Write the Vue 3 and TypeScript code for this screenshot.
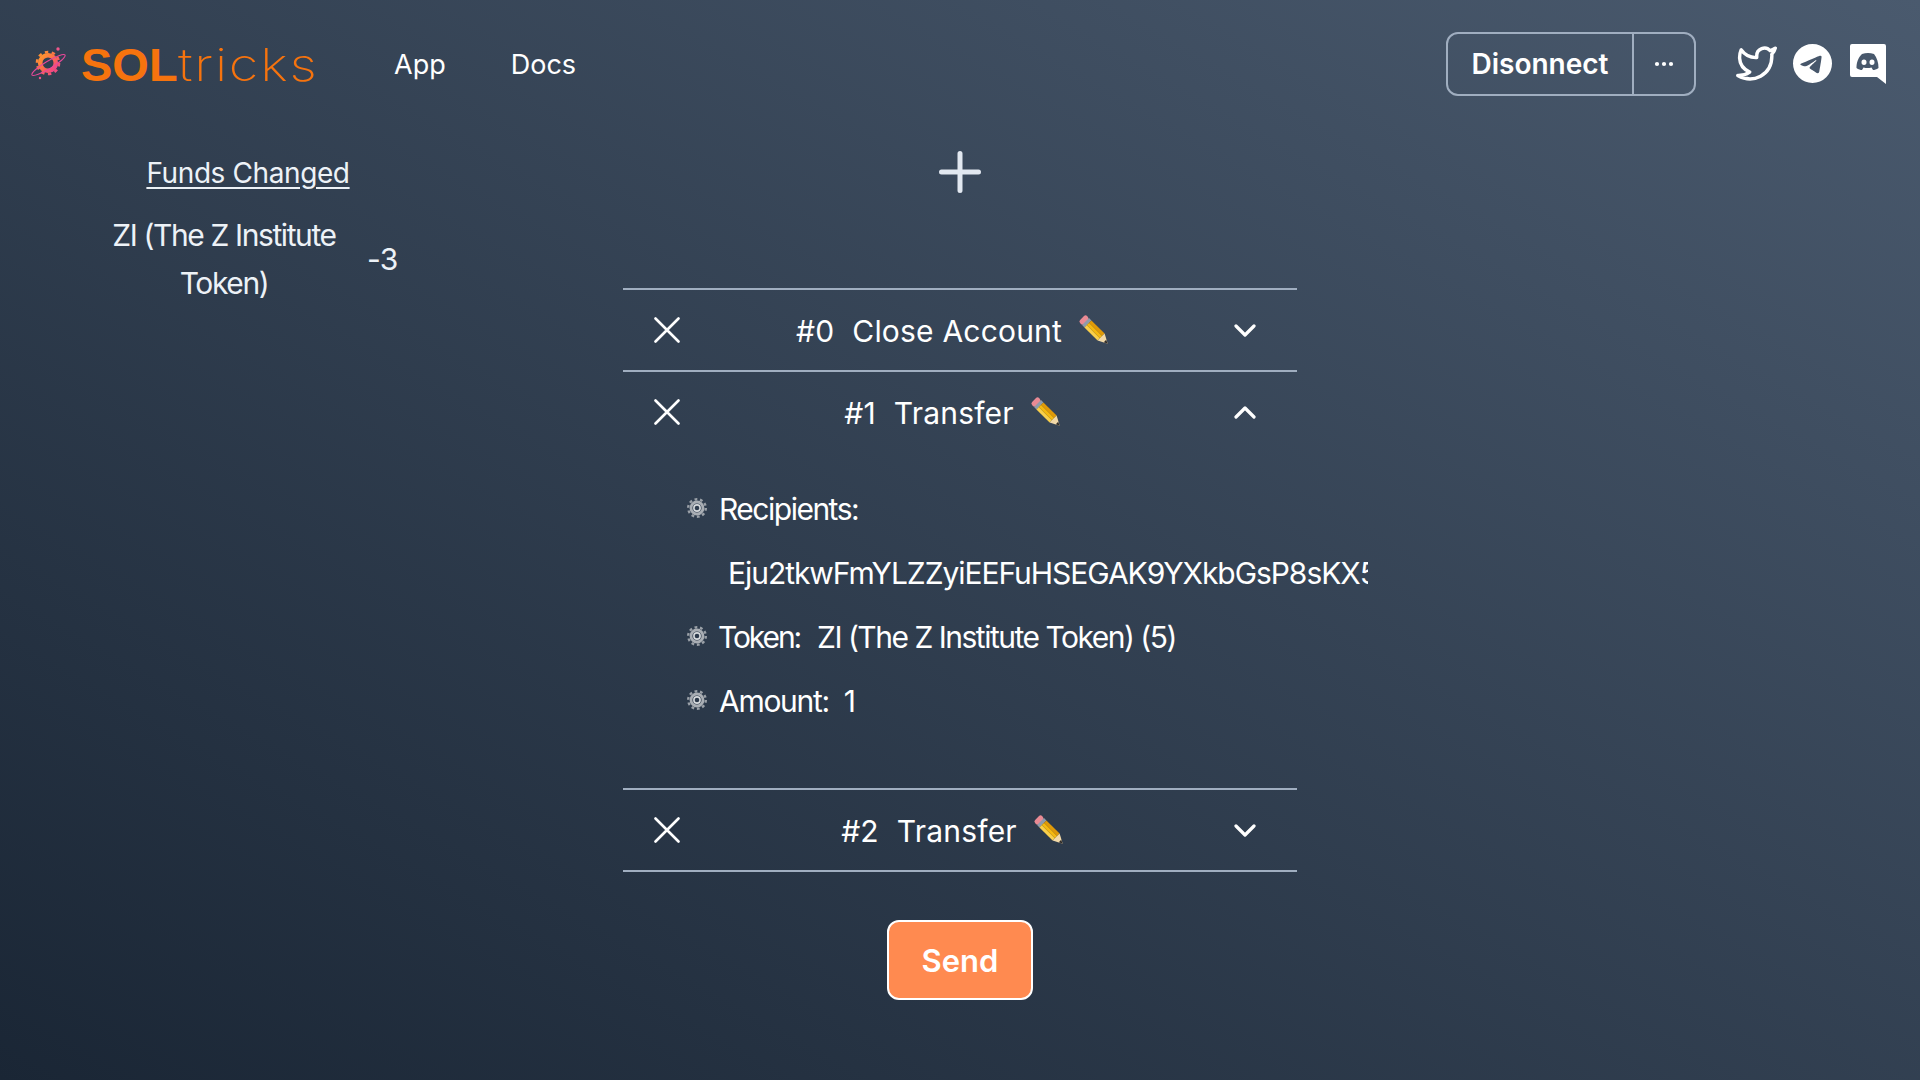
<script setup lang="ts">
interface Instruction {
  id: number
  name: string
  open: boolean
}

const instructions: Instruction[] = [
  { id: 0, name: 'Close Account', open: false },
  { id: 1, name: 'Transfer', open: true },
  { id: 2, name: 'Transfer', open: false },
]

const recipient = 'Eju2tkwFmYLZZyiEEFuHSEGAK9YXkbGsP8sKX5wnmHkP'
</script>

<template>
  <div class="page">
    <header class="topbar">
      <div class="brand">
        <svg class="brand-mark" viewBox="0 0 36 34">
          <defs>
            <linearGradient id="markFill" x1="0" y1="0" x2="1" y2="1">
              <stop offset="0" stop-color="#ff9a2a" />
              <stop offset="0.55" stop-color="#fb6a4f" />
              <stop offset="1" stop-color="#ee3f94" />
            </linearGradient>
          </defs>
          <circle cx="16" cy="16" r="7.800" fill="none" stroke="url(#markFill)" stroke-width="4.600" />
          <circle cx="16" cy="16" r="11" fill="none" stroke="url(#markFill)" stroke-width="2.600" stroke-dasharray="3.400 3.510" />
          <ellipse cx="16.500" cy="18" rx="19.300" ry="3.800" transform="rotate(-31 16.500 18)" fill="none" stroke="#e8489a" stroke-width="1.100" />
          <circle cx="26" cy="2" r="1.700" fill="#f0568c" />
          <circle cx="8" cy="31" r="1.200" fill="#f0568c" />
        </svg>
        <span class="brand-name"><b>SOL</b><i>tricks</i></span>
      </div>
      <nav class="nav">
        <a>App</a>
        <a>Docs</a>
      </nav>
      <div class="spacer"></div>
      <div class="wallet">
        <button class="wallet-main">Disonnect</button>
        <button class="wallet-more">
          <svg viewBox="0 0 20 6" width="20" height="6"><circle cx="3" cy="3" r="2.100" /><circle cx="10" cy="3" r="2.100" /><circle cx="17" cy="3" r="2.100" /></svg>
        </button>
      </div>
      <div class="socials">
        <svg class="tw" viewBox="0 0 24 24" fill="none" stroke="#fff" stroke-width="2" stroke-linejoin="round" stroke-linecap="round">
          <path d="M23 3a10.9 10.9 0 0 1-3 1.53 4.48 4.48 0 0 0-7.86 3v1A10.66 10.66 0 0 1 3 4s-4 9 5 13a11.64 11.64 0 0 1-7 2c9 5 20 0 20-11.5a4.5 4.5 0 0 0-.08-.83A7.72 7.72 0 0 0 23 3z" />
        </svg>
        <svg class="tg" viewBox="0 0 16 16" fill="#fff">
          <path fill-rule="evenodd" d="M16 8A8 8 0 1 1 0 8a8 8 0 0 1 16 0zM8.287 5.906c-.778.324-2.334.994-4.666 2.01-.378.15-.577.298-.595.442-.03.243.275.339.69.47l.175.055c.408.133.958.288 1.243.294.26.006.549-.1.868-.32 2.179-1.471 3.304-2.214 3.374-2.23.05-.012.12-.026.166.016.047.041.042.12.037.141-.03.129-1.227 1.241-1.846 1.817-.193.18-.33.307-.358.336a8.154 8.154 0 0 1-.188.186c-.38.366-.664.64.015 1.088.327.216.589.393.85.571.284.194.568.387.936.629.093.06.183.125.27.187.331.236.63.448.997.414.214-.02.435-.22.547-.82.265-1.417.786-4.486.906-5.751a1.426 1.426 0 0 0-.013-.315.337.337 0 0 0-.114-.217.526.526 0 0 0-.31-.093c-.3.005-.763.166-2.984 1.09z" />
        </svg>
        <svg class="dc" viewBox="0 0 36 40" fill="#fff">
          <path fill-rule="evenodd" d="M2 0h32a2 2 0 0 1 2 2v38l-9-7H2a2 2 0 0 1-2-2V2a2 2 0 0 1 2-2zM12 10c4-1.2 8-1.2 12 0 3 4 4.500 8.500 4.500 14-2 1.500-4 2-5.500 2l-1.500-2.500c-3 .8-5 .8-8 0L12 26c-1.500 0-3.500-.5-5.500-2 0-5.500 1.500-10 5.500-14zM14 15.500a2.500 2.700 0 1 0 0 5.400a2.500 2.700 0 1 0 0-5.400zM22 15.500a2.500 2.700 0 1 0 0 5.400a2.500 2.700 0 1 0 0-5.400z" />
        </svg>
      </div>
    </header>

    <main class="content">
      <aside class="funds">
        <div class="funds-title">Funds Changed</div>
        <div class="funds-row">
          <div class="funds-token">ZI (The Z Institute Token)</div>
          <div class="funds-delta">-3</div>
        </div>
      </aside>

      <section class="builder">
        <button class="add">
          <svg viewBox="0 0 42 42" width="42" height="42"><path d="M21 2.500v37M2.500 21h37" stroke="#e2e8f0" stroke-width="5" stroke-linecap="round" /></svg>
        </button>

        <div class="list">
          <div v-for="item in instructions" :key="item.id" class="item">
            <div class="item-head">
              <svg class="close" viewBox="0 0 26 26"><path d="M1.500 1.500l23 23M24.500 1.500l-23 23" stroke="#fff" stroke-width="2.600" stroke-linecap="round" /></svg>
              <div class="item-title">
                <span>#{{ item.id }}</span>
                <span>{{ item.name }}</span>
                <svg class="pencil" viewBox="0 0 30 30">
                  <g transform="rotate(-45 15 15)">
                    <rect x="10.500" y="-1" width="9" height="5" rx="2" fill="#e98a94" />
                    <rect x="10.500" y="3.500" width="9" height="3" fill="#8f9bab" />
                    <rect x="10.500" y="6.500" width="3" height="17" fill="#f9cf4a" />
                    <rect x="13.500" y="6.500" width="3" height="17" fill="#f5b90f" />
                    <rect x="16.500" y="6.500" width="3" height="17" fill="#e09a08" />
                    <path d="M10.500 23.500h9L15 32z" fill="#f2d9a8" />
                    <path d="M13.500 28.500h3L15 32z" fill="#2d2a28" />
                  </g>
                </svg>
              </div>
              <svg class="chevron" viewBox="0 0 22 13"><path :d="item.open ? 'M2 11l9-9 9 9' : 'M2 2l9 9 9-9'" fill="none" stroke="#fff" stroke-width="3.200" stroke-linecap="round" stroke-linejoin="round" /></svg>
            </div>
            <div v-if="item.open" class="item-body">
              <div class="field">
                <svg class="gear" viewBox="0 0 20 20"><use href="#gearShape" /></svg>
                <span>Recipients:</span>
              </div>
              <div class="field address">{{ recipient }}</div>
              <div class="field">
                <svg class="gear" viewBox="0 0 20 20"><use href="#gearShape" /></svg>
                <span class="label">Token:</span>
                <span>ZI (The Z Institute Token) (5)</span>
              </div>
              <div class="field amount">
                <svg class="gear" viewBox="0 0 20 20"><use href="#gearShape" /></svg>
                <span>Amount:</span>
                <span>1</span>
              </div>
            </div>
          </div>
        </div>

        <button class="send">Send</button>
      </section>
    </main>

    <svg width="0" height="0" class="defs">
      <defs>
        <g id="gearShape" fill="none">
          <circle cx="10" cy="10" r="8.800" stroke="#9ba1a8" stroke-width="2.400" stroke-dasharray="2.800 2.730" />
          <circle cx="10" cy="10" r="6" stroke="#a9aeb4" stroke-width="2.800" />
          <circle cx="10" cy="10" r="3.100" stroke="#d6d9dc" stroke-width="1.600" />
        </g>
      </defs>
    </svg>
  </div>
</template>

<style>
html,
body {
  margin: 0;
  background: #1a2635;
}
</style>

<style scoped>
.page {
  min-height: 1080px;
  background: linear-gradient(to top right, #1a2635, #4a5a6e);
  font-family: Inter, "Liberation Sans", sans-serif;
  color: #fff;
  overflow: hidden;
}

.topbar {
  display: flex;
  align-items: center;
  height: 127px;
  padding: 0 34px 0 32px;
  box-sizing: border-box;
}

.brand {
  display: flex;
  align-items: center;
  width: 362px;
}

.brand-mark {
  width: 36px;
  height: 34px;
  flex: none;
  overflow: visible;
}

.brand-name {
  margin-left: 13px;
  color: #f6730e;
  font-size: 47px;
  line-height: 1;
  white-space: nowrap;
}

.brand-name b {
  font-family: "Liberation Sans", sans-serif;
  font-weight: 700;
}

.brand-name i {
  display: inline-block;
  font-style: normal;
  font-weight: 200;
  font-size: 45px;
  letter-spacing: 1.5px;
  transform: scaleX(1.2);
  transform-origin: left center;
}

.nav {
  display: flex;
  gap: 65px;
  margin-top: 2px;
  font-size: 27px;
}

.spacer {
  flex: 1;
}

.wallet {
  display: flex;
  height: 64px;
  border: 2px solid #a0aec0;
  border-radius: 12px;
  box-sizing: border-box;
}

.wallet button {
  background: none;
  border: 0;
  color: #fff;
  font-family: inherit;
  padding: 0;
}

.wallet-main {
  width: 186px;
  font-size: 28px;
  font-weight: 600;
  border-right: 2px solid #a0aec0 !important;
}

.wallet-more {
  width: 60px;
  display: flex;
  align-items: center;
  justify-content: center;
}

.wallet-more svg {
  fill: #fff;
}

.socials {
  display: flex;
  align-items: center;
  margin-left: 40px;
  gap: 16px;
}

.tw {
  width: 41px;
  height: 41px;
}

.tg {
  width: 39px;
  height: 39px;
}

.dc {
  width: 36px;
  height: 40px;
  margin-left: 2px;
}

.content {
  display: grid;
  grid-template-columns: 623px 674px;
}

.funds {
  width: 496px;
  padding-top: 25px;
  text-align: center;
}

.funds-title {
  font-size: 28px;
  line-height: 42px;
  letter-spacing: -0.4px;
  text-decoration: underline;
  text-underline-offset: 4px;
  color: #edf2f7;
}

.funds-row {
  display: flex;
  align-items: center;
  padding: 17px 0 0 108px;
  font-size: 30px;
  line-height: 48px;
  letter-spacing: -1.4px;
  color: #edf2f7;
}

.funds-token {
  width: 232px;
}

.funds-delta {
  margin-left: 27px;
  letter-spacing: -0.8px;
}

.builder {
  display: flex;
  flex-direction: column;
  align-items: center;
}

.add {
  display: block;
  width: 42px;
  height: 42px;
  margin-top: 24px;
  padding: 0;
  background: none;
  border: 0;
}

.list {
  width: 100%;
  margin-top: 95px;
  border-top: 2px solid #a0aec0;
}

.item {
  border-bottom: 2px solid #a0aec0;
}

.item-head {
  display: flex;
  align-items: center;
  height: 80px;
  padding: 0 41px 0 31px;
}

.close {
  width: 26px;
  height: 26px;
  flex: none;
}

.chevron {
  width: 22px;
  height: 13px;
  flex: none;
}

.item-title {
  flex: 1;
  display: flex;
  align-items: center;
  justify-content: center;
  gap: 18px;
  padding: 1px 7px 0 0;
  font-size: 30px;
  letter-spacing: 0.2px;
}

.pencil {
  width: 33px;
  height: 33px;
  margin-left: -2px;
}

.item-body {
  display: flex;
  flex-direction: column;
  width: 745px;
  padding: 25px 0 55px;
  overflow: hidden;
}

.field {
  display: flex;
  align-items: center;
  height: 64px;
  padding-left: 64px;
  font-size: 30px;
  letter-spacing: -1.5px;
  white-space: nowrap;
}

.field span + span {
  margin-left: 15px;
}

.field .label {
  margin-left: -1px;
  letter-spacing: -2.1px;
}

.field .label + span {
  margin-left: 17px;
}

.amount {
  letter-spacing: -1.3px;
}

.address {
  padding-left: 105px;
  letter-spacing: -1.05px;
}

.gear {
  width: 20px;
  height: 20px;
  margin: 0 12px 2px 0;
  flex: none;
}

.send {
  width: 146px;
  height: 80px;
  margin-top: 48px;
  background: #ff8a50;
  border: 2px solid #fff;
  border-radius: 12px;
  color: #fff;
  font-family: inherit;
  font-size: 31px;
  font-weight: 600;
}

.defs {
  position: absolute;
}
</style>
